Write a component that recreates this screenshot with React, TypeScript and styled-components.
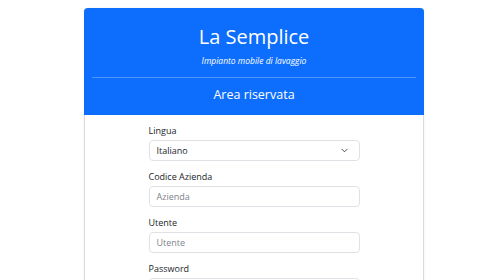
import React from "react";
import styled, { createGlobalStyle } from "styled-components";

const Global = createGlobalStyle`
  html, body { margin: 0; padding: 0; background: #ffffff; }
  body { font-family: "Open Sans", "Noto Sans", sans-serif; color: #212529; }
  * { box-sizing: border-box; }
`;

const Page = styled.div`
  display: flex;
  padding: 8px 76px 0 84px;
`;

const Card = styled.div`
  width: 340px;
  min-height: 300px;
  background: #ffffff;
  border: 1px solid rgba(0, 0, 0, 0.14);
  border-radius: 4px;
  box-shadow: 0 0 2px rgba(0, 0, 0, 0.08);
  display: flex;
  flex-direction: column;
`;

const Header = styled.div`
  margin: -1px -1px 0;
  background: #0d6efd;
  border-radius: 4px 4px 0 0;
  color: #ffffff;
  text-align: center;
  padding: 17px 8px 11px;
  display: flex;
  flex-direction: column;
`;

const Title = styled.h1`
  margin: 0;
  font-size: 20px;
  line-height: 24px;
  font-weight: 400;
`;

const Subtitle = styled.div`
  margin-top: 6px;
  font-size: 8.5px;
  line-height: 12px;
  font-style: italic;
`;

const Rule = styled.hr`
  margin: 10px 0 0;
  border: 0;
  border-top: 1px solid rgba(255, 255, 255, 0.28);
  height: 0;
`;

const Section = styled.h2`
  margin: 8px 0 0;
  font-size: 12.5px;
  line-height: 18px;
  font-weight: 400;
`;

const Body = styled.div`
  padding: 9px 0 0;
  display: flex;
  flex-direction: column;
  align-items: center;
`;

const Form = styled.form`
  width: 211px;
  display: flex;
  flex-direction: column;
`;

const Group = styled.div`
  display: flex;
  flex-direction: column;
  margin-bottom: 9px;
`;

const Label = styled.label`
  font-size: 9px;
  line-height: 14px;
  margin-bottom: 2px;
  color: #212529;
`;

const Field = styled.div`
  position: relative;
  height: 21px;
  border: 1px solid #dee2e6;
  border-radius: 4px;
  background: #ffffff;
  display: flex;
  align-items: center;
  padding: 0 7px;
`;

const Value = styled.span<{ $placeholder?: boolean }>`
  font-size: 9px;
  line-height: 12px;
  color: ${(p) => (p.$placeholder ? "#7d848b" : "#212529")};
  flex: 1;
`;

const Chevron = styled.svg`
  width: 7px;
  height: 5px;
  margin-right: 4px;
`;

export default function App() {
  return (
    <>
      <Global />
      <Page>
        <Card>
          <Header>
            <Title>La Semplice</Title>
            <Subtitle>Impianto mobile di lavaggio</Subtitle>
            <Rule />
            <Section>Area riservata</Section>
          </Header>
          <Body>
            <Form>
              <Group>
                <Label>Lingua</Label>
                <Field>
                  <Value>Italiano</Value>
                  <Chevron viewBox="0 0 16 10">
                    <path d="M2 2l6 6 6-6" fill="none" stroke="#343a40" strokeWidth="2" strokeLinecap="round" strokeLinejoin="round" />
                  </Chevron>
                </Field>
              </Group>
              <Group>
                <Label>Codice Azienda</Label>
                <Field>
                  <Value $placeholder>Azienda</Value>
                </Field>
              </Group>
              <Group>
                <Label>Utente</Label>
                <Field>
                  <Value $placeholder>Utente</Value>
                </Field>
              </Group>
              <Group>
                <Label>Password</Label>
                <Field />
              </Group>
            </Form>
          </Body>
        </Card>
      </Page>
    </>
  );
}
